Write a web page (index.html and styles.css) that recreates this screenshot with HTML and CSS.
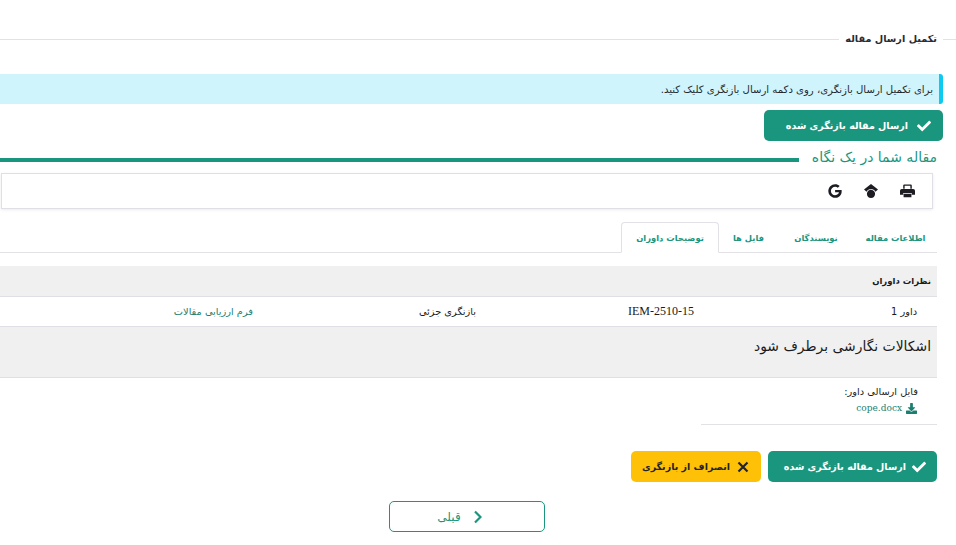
FILE: index.html
```html
<!DOCTYPE html>
<html lang="fa" dir="rtl">
<head>
<meta charset="utf-8">
<title>تکمیل ارسال مقاله</title>
<link rel="stylesheet" href="styles.css">
</head>
<body>
<main class="page">
  <div class="section-title">
    <span class="rule rule-short"></span>
    <h1>تکمیل ارسال مقاله</h1>
    <span class="rule"></span>
  </div>

  <div class="alert">برای تکمیل ارسال بازنگری، روی دکمه ارسال بازنگری کلیک کنید.</div>

  <a class="btn btn-green btn-top">
    <svg class="ico ico-check" viewBox="0 0 512 512"><path d="M173.898 439.404l-166.4-166.4c-9.997-9.997-9.997-26.206 0-36.204l36.203-36.204c9.997-9.998 26.207-9.998 36.204 0L192 312.69 432.095 72.596c9.997-9.997 26.207-9.997 36.204 0l36.203 36.204c9.997 9.997 9.997 26.206 0 36.204l-294.4 294.401c-9.998 9.997-26.207 9.997-36.204-.001z"/></svg>
    <span>ارسال مقاله بازنگری شده</span>
  </a>

  <div class="glance-head">
    <h2>مقاله شما در یک نگاه</h2>
    <span class="glance-bar"></span>
  </div>

  <div class="toolbar">
    <svg class="tool tool-print" viewBox="1.500 3 21 18.500"><path d="M6 9V4.500A1.500 1.500 0 0 1 7.500 3h9A1.500 1.500 0 0 1 18 4.500V9h-2V5H8v4zM4 9.500h16a2.500 2.500 0 0 1 2.500 2.500v5.500H18V15H6v2.500H1.500V12A2.500 2.500 0 0 1 4 9.500zM6.500 16h11v5h-11z"/></svg>
    <svg class="tool" viewBox="0 0 512 512"><path d="M390.900 298.500c9.300 19.500 14.400 41.200 14.400 64.100C405.300 445.100 338.500 512 256 512s-149.300-66.900-149.300-149.300c0-22.900 5.200-44.600 14.400-64 1.700-3.600 3.600-7.200 5.600-10.700 4.400-7.600 9.400-14.700 15-21.300 27.400-32.600 68.500-53.300 114.400-53.300 33.600 0 64.600 11.100 89.600 29.900 9.100 6.900 17.400 14.700 24.800 23.500 5.600 6.600 10.600 13.800 15 21.300 2 3.400 3.800 7 5.400 10.400zm26.400-18.800c-30.100-58.400-91-98.400-161.300-98.400s-131.200 40-161.300 98.400L0 202.700 256 0 512 202.700l-94.700 77z"/></svg>
    <svg class="tool" viewBox="0 0 488 512"><path d="M488 261.800C488 403.300 391.100 504 248 504 110.800 504 0 393.200 0 256S110.800 8 248 8c66.800 0 123 24.500 166.300 64.900l-67.500 64.900C258.500 52.600 94.300 116.600 94.300 256c0 86.500 69.100 156.600 153.700 156.600 98.200 0 135-70.400 140.800-106.900H248v-85.300h236.100c2.300 12.700 3.900 24.900 3.900 41.400z"/></svg>
  </div>

  <nav class="tabs">
    <a class="tab">اطلاعات مقاله</a>
    <a class="tab">نویسندگان</a>
    <a class="tab">فایل ها</a>
    <a class="tab tab-active">توضیحات داوران</a>
  </nav>

  <section class="reviews">
    <div class="reviews-head">نظرات داوران</div>
    <div class="review-row">
      <span>داور 1</span>
      <span class="latin">IEM-2510-15</span>
      <span>بازنگری جزئی</span>
      <a class="link">فرم ارزیابی مقالات</a>
    </div>
    <div class="review-note">اشکالات نگارشی برطرف شود</div>
    <div class="files">
      <div class="files-label">فایل ارسالی داور:</div>
      <a class="file-link">
        <svg class="ico ico-dl" viewBox="0 0 512 512"><path d="M216 0h80c13.300 0 24 10.700 24 24v168h87.700c17.800 0 26.700 21.500 14.100 34.100L269.700 378.300c-7.500 7.500-19.800 7.500-27.300 0L90.100 226.100c-12.600-12.600-3.700-34.100 14.100-34.100H192V24c0-13.300 10.700-24 24-24zm296 376v112c0 13.300-10.700 24-24 24H24c-13.300 0-24-10.700-24-24V376c0-13.300 10.700-24 24-24h146.700l49 49c20.100 20.100 52.500 20.100 72.600 0l49-49H488c13.300 0 24 10.700 24 24z"/></svg>
        <span class="file-name" dir="ltr">cope.docx</span>
      </a>
    </div>
  </section>

  <div class="actions">
    <a class="btn btn-green btn-send">
      <svg class="ico ico-check" viewBox="0 0 512 512"><path d="M173.898 439.404l-166.4-166.4c-9.997-9.997-9.997-26.206 0-36.204l36.203-36.204c9.997-9.998 26.207-9.998 36.204 0L192 312.69 432.095 72.596c9.997-9.997 26.207-9.997 36.204 0l36.203 36.204c9.997 9.997 9.997 26.206 0 36.204l-294.4 294.401c-9.998 9.997-26.207 9.997-36.204-.001z"/></svg>
      <span>ارسال مقاله بازنگری شده</span>
    </a>
    <a class="btn btn-yellow">
      <svg class="ico ico-x" viewBox="0 0 12 12"><path d="M1.500 1.500l9 9M10.500 1.500l-9 9"/></svg>
      <span>انصراف از بازنگری</span>
    </a>
  </div>

  <div class="pager">
    <a class="btn-back">
      <svg class="ico-chev" viewBox="1 0 8 14"><path d="M2 1.500L7.500 7 2 12.500"/></svg>
      <span>قبلی</span>
    </a>
  </div>
</main>
</body>
</html>
```
FILE: styles.css
```css
* { box-sizing: border-box; }
html, body { margin: 0; padding: 0; background: #fff; }
body {
  width: 956px;
  height: 545px;
  overflow: hidden;
  font-family: "DejaVu Sans", "Noto Sans", sans-serif;
  color: #212529;
}
.page { display: flex; flex-direction: column; height: 545px; padding-top: 30px; }

.section-title { display: flex; align-items: center; height: 18px; margin-bottom: 26px; }
.section-title h1 { margin: 0 0 2px; padding: 0 6px; font-size: 9.700px; font-weight: 700; white-space: nowrap; color: #2b2b33; }
.rule { flex: 1; height: 1px; background: #e2e2e6; }
.rule-short { flex: 0 0 13px; }

.alert {
  height: 30px;
  margin-right: 13px;
  padding-right: 6px;
  display: flex;
  align-items: center;
  background: #cff4fc;
  border-right: 4px solid #0dcaf0;
  border-top-right-radius: 3px;
  border-bottom-right-radius: 3px;
  font-size: 10.100px;
  color: #1f2a30;
  white-space: nowrap;
}

.btn {
  display: flex;
  align-items: center;
  height: 31px;
  border-radius: 5px;
  font-size: 9.500px;
  font-weight: 700;
  white-space: nowrap;
}
.btn-green { background: #1b967e; color: #fff; }
.btn-top { width: 179px; margin: 6px 13px 0 0; padding-right: 12px; gap: 9px; }
.btn-send { width: 169px; padding-right: 11px; gap: 6px; }
.btn-yellow { width: 130px; background: #ffc107; color: #212529; padding-right: 12px; gap: 7px; }

.ico { flex: none; fill: currentColor; }
.ico-check { width: 14px; height: 14px; }
.ico-x { width: 12px; height: 12px; fill: none; stroke: currentColor; stroke-width: 2.200; }
.ico-dl { width: 11px; height: 11px; }

.glance-head { display: flex; align-items: center; height: 32px; padding-right: 19px; gap: 13px; }
.glance-head h2 { margin: 0; font-size: 14px; font-weight: 400; color: #1b967e; white-space: nowrap; }
.glance-bar { flex: 1; height: 4px; margin-top: 6px; background: #1b967e; }

.toolbar {
  display: flex;
  align-items: center;
  gap: 22px;
  height: 36px;
  margin: 0 23px 0 1px;
  padding-right: 17px;
  border: 1px solid #dfdfe5;
  box-shadow: 0 1px 3px rgba(0,0,0,.08);
  background: #fff;
}
.tool { width: 14px; height: 14px; fill: #1c1c22; flex: none; }
.tool-print { width: 15px; }

.tabs { display: flex; height: 31px; margin: 13px 19px 0 0; border-bottom: 1px solid #e1e1e6; }
.tab {
  display: flex; align-items: center; justify-content: center;
  height: 31px;
  font-size: 8.400px; font-weight: 700; color: #1b967e;
  white-space: nowrap;
}
.tab:nth-child(1) { width: 83px; }
.tab:nth-child(2) { width: 76px; }
.tab:nth-child(3) { width: 59px; }
.tab-active {
  width: 98px;
  background: #fff;
  border: 1px solid #e1e1e6;
  border-bottom-color: #fff;
  border-radius: 4px 4px 0 0;
}

.reviews { margin: 13px 19px 0 0; }
.reviews-head {
  height: 31px;
  display: flex; align-items: center;
  padding-right: 6px;
  background: #f0f0f0;
  border-bottom: 1px solid #dfdfe5;
  font-size: 8.500px; font-weight: 700; color: #1a1a20;
}
.review-row {
  display: grid;
  grid-template-columns: 223px 218px 223px 1fr;
  align-items: center;
  height: 30px;
  padding-right: 20px;
  border-bottom: 1px solid #dfdfe5;
  font-size: 9.800px;
  color: #1a1a20;
  white-space: nowrap;
}
.latin { font-family: "Liberation Serif", serif; font-size: 12px; direction: ltr; text-align: right; }
.link { color: #1b7f70; }
.review-note {
  height: 51px;
  padding: 11px 6px 0 0;
  background: #f0f0f0;
  border-bottom: 1px solid #dfdfe5;
  font-size: 13.900px;
  color: #1a1a20;
}
.files {
  width: 236px;
  height: 47px;
  padding: 5px 20px 0 0;
  border-bottom: 1px solid #e1e1e6;
}
.files-label { font-size: 9.800px; color: #1a1a20; height: 17px; display: flex; align-items: center; margin-right: -1px; }
.file-link { display: flex; align-items: center; gap: 4px; height: 14px; margin-top: 1px; color: #1b7f70; }
.file-name { font-family: "DejaVu Serif", serif; font-size: 9px; }

.actions { display: flex; gap: 7px; margin: 26px 19px 0 0; }

.pager { display: flex; justify-content: center; margin-top: 19px; padding-right: 22px; }
.btn-back {
  display: flex; align-items: center; justify-content: center; gap: 13px;
  width: 156px; height: 31px;
  padding-right: 15px;
  border: 1px solid #1b967e;
  border-radius: 5px;
  font-size: 12px;
  color: #1b967e;
}
.ico-chev { width: 8px; height: 14px; fill: none; stroke: #1b967e; stroke-width: 2.200; }
```
